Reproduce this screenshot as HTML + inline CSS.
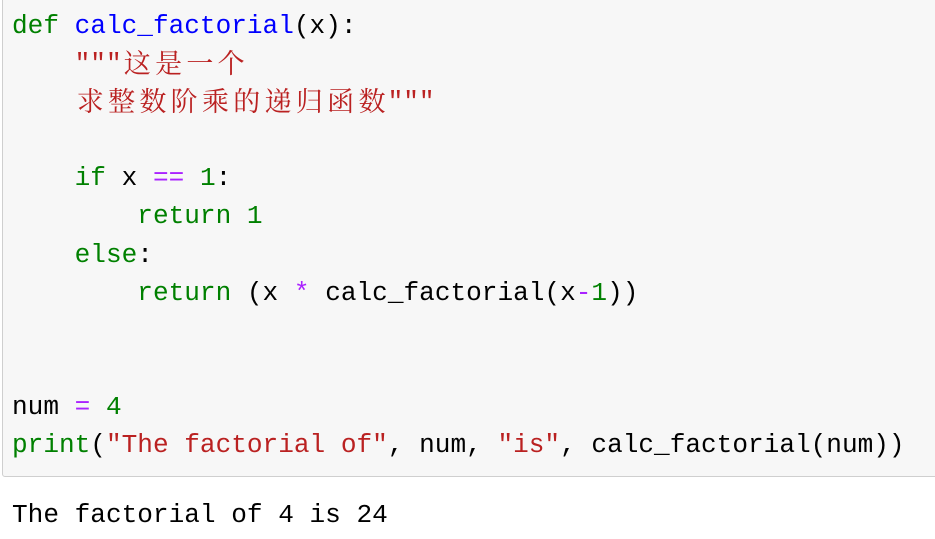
<!DOCTYPE html>
<html><head><meta charset="utf-8"><style>
html,body{margin:0;padding:0;background:#fff;width:935px;height:539px;overflow:hidden}
.box{position:absolute;left:2px;top:-4px;width:960px;height:481px;background:#f7f7f7;border:1px solid #cfcfcf;border-radius:3px;box-sizing:border-box}
pre{position:absolute;left:12px;margin:0;font-family:"Liberation Mono",monospace;font-size:26.1px;line-height:38.1px;color:#000;white-space:pre}
.code{top:7px}
.out{top:496px}
.k{color:#008000}.f{color:#0000ff}.s{color:#ba2121}.o{color:#aa22ff}.n{color:#008000}
.c{display:inline-block;width:31.3px;text-align:center;font-family:"Noto Serif CJK SC","Noto Sans CJK SC",serif;font-size:27px;line-height:20px;vertical-align:-2px}
</style></head><body>
<div class="box"></div>
<pre class="code"><span class="k">def</span> <span class="f">calc_factorial</span>(x):
    <span class="s">"""<span class="c">这</span><span class="c">是</span><span class="c">一</span><span class="c">个</span>
    <span class="c">求</span><span class="c">整</span><span class="c">数</span><span class="c">阶</span><span class="c">乘</span><span class="c">的</span><span class="c">递</span><span class="c">归</span><span class="c">函</span><span class="c">数</span>"""</span>

    <span class="k">if</span> x <span class="o">==</span> <span class="n">1</span>:
        <span class="k">return</span> <span class="n">1</span>
    <span class="k">else</span>:
        <span class="k">return</span> (x <span class="o">*</span> calc_factorial(x<span class="o">-</span><span class="n">1</span>))


num <span class="o">=</span> <span class="n">4</span>
<span class="k">print</span>(<span class="s">"The factorial of"</span>, num, <span class="s">"is"</span>, calc_factorial(num))</pre>
<pre class="out">The factorial of 4 is 24</pre>
</body></html>
